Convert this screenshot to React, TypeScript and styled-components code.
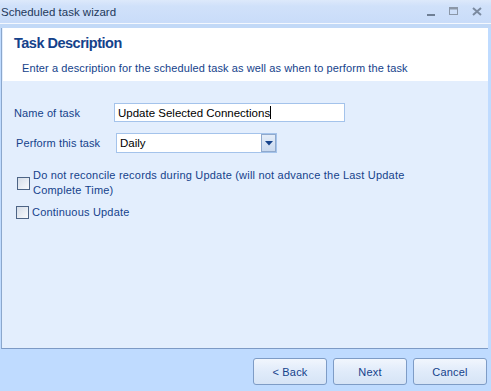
import React from "react";
import styled, { createGlobalStyle } from "styled-components";

const GlobalStyle = createGlobalStyle`
  html, body {
    margin: 0;
    padding: 0;
    overflow: hidden;
  }
  body {
    font-family: "Liberation Sans", "DejaVu Sans", sans-serif;
  }
`;

const ink = "#15428b";

const Window = styled.div`
  width: 491px;
  height: 391px;
  display: flex;
  flex-direction: column;
  background: #bfdbff;
`;

const TitleBar = styled.div`
  height: 23px;
  display: flex;
  align-items: center;
  justify-content: space-between;
  padding-left: 1px;
  background: linear-gradient(#dde9fb 0px, #d0e1fa 6px, #c9dcf9 100%);
  box-sizing: border-box;
`;

const TitleText = styled.span`
  font-size: 11.5px;
  color: #1e395b;
`;

const Controls = styled.div`
  display: flex;
  align-items: center;
  gap: 14px;
  padding-right: 9px;
  height: 100%;
`;

const Strip = styled.div`
  height: 5px;
  border-top: 1px solid #f4f8fe;
  background: #c2d9f7;
  box-sizing: border-box;
`;

const Panel = styled.div`
  height: 320px;
  margin: 0 3px 0 1px;
  display: flex;
  flex-direction: column;
  border-left: 1px solid #8ba7cc;
  border-bottom: 1px solid #7d9ac5;
  background: #e3eefd;
`;

const Header = styled.div`
  height: 53px;
  margin-left: 1px;
  background: #ffffff;
  padding: 7px 0 0 11px;
  box-sizing: border-box;
`;

const Heading = styled.div`
  font-size: 14.5px;
  font-weight: bold;
  color: ${ink};
  letter-spacing: -0.5px;
  line-height: 17px;
`;

const SubHeading = styled.div`
  font-size: 11px;
  color: ${ink};
  margin: 10px 0 0 8px;
  line-height: 13px;
  letter-spacing: 0.1px;
`;

const Body = styled.div`
  padding: 22px 0 0 12px;
  display: flex;
  flex-direction: column;
`;

const Row = styled.div<{ $indent?: number; $gap?: number }>`
  display: flex;
  align-items: center;
  margin-left: ${(p) => p.$indent ?? 0}px;
  margin-bottom: ${(p) => p.$gap ?? 0}px;
`;

const Label = styled.span`
  width: 100px;
  font-size: 11px;
  color: ${ink};
  letter-spacing: 0.1px;
`;

const TextBox = styled.div`
  width: 231px;
  height: 19px;
  box-sizing: border-box;
  border: 1px solid #a4c3eb;
  background: #ffffff;
  display: flex;
  align-items: center;
  padding-left: 3px;
  font-size: 11.5px;
  color: #000000;
`;

const Caret = styled.span`
  width: 1px;
  height: 13px;
  background: #000000;
`;

const Combo = styled.div`
  width: 161px;
  height: 20px;
  box-sizing: border-box;
  border: 1px solid #a4c3eb;
  background: #ffffff;
  display: flex;
  align-items: center;
  font-size: 11.5px;
  color: #000000;
`;

const ComboText = styled.span`
  flex: 1;
  padding-left: 3px;
`;

const DropButton = styled.div`
  width: 15px;
  height: 18px;
  box-sizing: border-box;
  border: 1px solid #8fa9cd;
  background: linear-gradient(#e4edf9, #c9d9ef);
  display: flex;
  align-items: center;
  justify-content: center;
`;

const CheckRow = styled.label<{ $indent: number; $gap?: number }>`
  display: flex;
  align-items: center;
  gap: 3px;
  margin-left: ${(p) => p.$indent}px;
  margin-bottom: ${(p) => p.$gap ?? 0}px;
  font-size: 11px;
  color: ${ink};
  line-height: 15px;
  letter-spacing: 0.2px;
`;

const Box = styled.span`
  flex: none;
  width: 13px;
  height: 13px;
  box-sizing: border-box;
  border: 1px solid #4d6485;
  background: linear-gradient(135deg, #d5dde8, #f8fafd);
`;

const Footer = styled.div`
  flex: 1;
  display: flex;
  justify-content: flex-end;
  align-items: center;
  gap: 6px;
  padding: 3px 4px 0 0;
`;

const Button = styled.div`
  width: 74px;
  height: 27px;
  box-sizing: border-box;
  border: 1px solid #7e9cc6;
  border-radius: 3px;
  background: linear-gradient(#f1f6fd, #e0ebfa 50%, #d6e4f6);
  display: flex;
  align-items: center;
  justify-content: center;
  font-size: 11px;
  color: ${ink};
  letter-spacing: 0.2px;
`;

const WindowControls = () => (
  <Controls>
    <svg width="8" height="12" viewBox="0 0 8 12">
      <rect x="0" y="8" width="8" height="2" fill="#6f7f95" />
    </svg>
    <svg width="9" height="9" viewBox="0 0 9 9">
      <rect x="0.5" y="0.5" width="8" height="7" fill="none" stroke="#8b97a8" />
      <rect x="0.5" y="0.5" width="8" height="2" fill="#8b97a8" />
    </svg>
    <svg width="10" height="9" viewBox="0 0 10 9">
      <path d="M1 1 L9 8 M9 1 L1 8" stroke="#7b8aa0" strokeWidth="2" />
    </svg>
  </Controls>
);

export default function App() {
  return (
    <Window>
      <GlobalStyle />
      <TitleBar>
        <TitleText>Scheduled task wizard</TitleText>
        <WindowControls />
      </TitleBar>
      <Strip />
      <Panel>
        <Header>
          <Heading>Task Description</Heading>
          <SubHeading>
            Enter a description for the scheduled task as well as when to perform the task
          </SubHeading>
        </Header>
        <Body>
          <Row $indent={0} $gap={11}>
            <Label>Name of task</Label>
            <TextBox>
              Update Selected Connections
              <Caret />
            </TextBox>
          </Row>
          <Row $indent={2} $gap={15}>
            <Label>Perform this task</Label>
            <Combo>
              <ComboText>Daily</ComboText>
              <DropButton>
                <svg width="8" height="5" viewBox="0 0 8 5">
                  <path d="M0 0 H8 L4 4.5 Z" fill={ink} />
                </svg>
              </DropButton>
            </Combo>
          </Row>
          <CheckRow $indent={3} $gap={7}>
            <Box />
            <span>
              Do not reconcile records during Update (will not advance the Last Update
              <br />
              Complete Time)
            </span>
          </CheckRow>
          <CheckRow $indent={2}>
            <Box />
            <span>Continuous Update</span>
          </CheckRow>
        </Body>
      </Panel>
      <Footer>
        <Button>&lt; Back</Button>
        <Button>Next</Button>
        <Button>Cancel</Button>
      </Footer>
    </Window>
  );
}
